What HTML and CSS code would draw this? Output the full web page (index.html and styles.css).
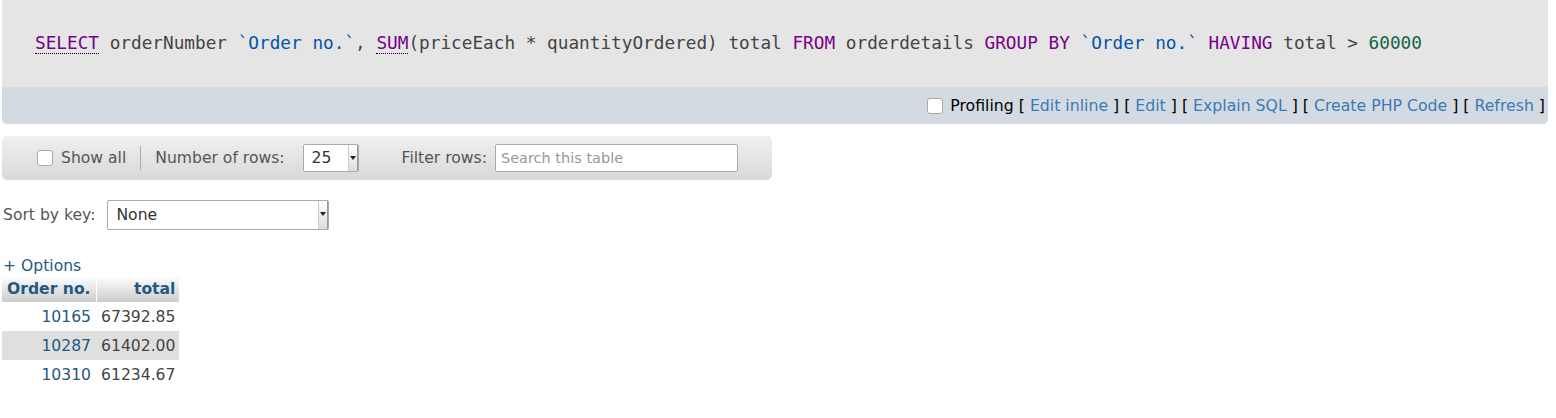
FILE: index.html
```html
<!DOCTYPE html>
<html>
<head>
<meta charset="utf-8">
<link rel="stylesheet" href="styles.css">
</head>
<body>
<div class="page">
  <div class="sqlbox">
    <div class="sql"><span class="kw abbr">SELECT</span> orderNumber <span class="str">`Order no.`</span>, <span class="kw abbr">SUM</span>(priceEach * quantityOrdered) total <span class="kw">FROM</span> orderdetails <span class="kw">GROUP</span> <span class="kw">BY</span> <span class="str">`Order no.`</span> <span class="kw">HAVING</span> total &gt; <span class="num">60000</span></div>
    <div class="tools">
      <span class="cb"></span><span class="line"><span class="prof">Profiling</span> [ <a>Edit inline</a> ] [ <a>Edit</a> ] [ <a>Explain SQL</a> ] [ <a>Create PHP Code</a> ] [ <a>Refresh</a> ]</span>
    </div>
  </div>

  <div class="navbar">
    <span class="cb"></span><span class="lbl showall">Show all</span>
    <span class="sep"></span>
    <span class="lbl">Number of rows:</span>
    <span class="select rows"><span class="val">25</span><span class="arrow"></span></span>
    <span class="lbl filter">Filter rows:</span>
    <span class="search">Search this table</span>
  </div>

  <div class="sortrow">
    <span class="lbl">Sort by key:</span>
    <span class="select sortsel"><span class="val">None</span><span class="arrow"></span></span>
  </div>

  <div class="options"><a>+ Options</a></div>

  <table class="data">
    <thead>
      <tr><th>Order no.</th><th>total</th></tr>
    </thead>
    <tbody>
      <tr><td class="link">10165</td><td>67392.85</td></tr>
      <tr class="even"><td class="link">10287</td><td>61402.00</td></tr>
      <tr><td class="link">10310</td><td>61234.67</td></tr>
    </tbody>
  </table>
</div>
</body>
</html>
```

FILE: styles.css
```css
html, body {
  margin: 0;
  padding: 0;
  background: #fff;
}
body {
  font-family: "DejaVu Sans", sans-serif;
  font-size: 15.6px;
  color: #444;
}
.page {
  padding-left: 2px;
  width: 1546px;
}
.sqlbox {
  background: #e5e5e5;
  border-radius: 0 0 5px 5px;
  overflow: hidden;
}
.sql {
  font-family: "DejaVu Sans Mono", monospace;
  font-size: 17.73px;
  color: #444;
  height: 87px;
  line-height: 87px;
  padding-left: 33px;
  white-space: pre;
}
.kw { color: #770088; }
.abbr { border-bottom: 1px dotted #000; }
.str { color: #0055aa; }
.num { color: #116644; }
.tools {
  background: #d3dae1;
  height: 37px;
  display: flex;
  align-items: center;
  justify-content: flex-end;
  padding-right: 3px;
  font-size: 15.72px;
  color: #000;
}
.tools .line { white-space: pre; }
.tools a { color: #3a7ab7; }
.tools .cb { margin-right: 7px; }
.prof { color: #000; }
.cb {
  display: inline-block;
  width: 14px;
  height: 14px;
  border: 1px solid #aaa;
  border-radius: 3px;
  background: #fff;
  margin-right: 8px;
  box-sizing: content-box;
}
.navbar {
  margin-top: 12px;
  width: 770px;
  height: 44px;
  box-sizing: border-box;
  border-radius: 5px;
  background: linear-gradient(#f0f0f0, #d8d8d8);
  display: flex;
  align-items: center;
  padding-left: 35px;
}
.lbl { color: #555; }
.sep {
  width: 1px;
  height: 24px;
  background: #aaa;
  margin: 0 14px 0 14px;
}
.select {
  display: inline-flex;
  align-items: center;
  justify-content: space-between;
  background: #fff;
  border: 1px solid #aaa;
  border-radius: 2px;
  height: 28px;
  box-sizing: border-box;
  color: #333;
}
.select .val { padding-left: 8px; }
.select .arrow {
  width: 10px;
  height: 26px;
  background: linear-gradient(#fff, #ddd);
  border-left: 1px solid #ccc;
  border-right: 1px solid #999;
  box-sizing: border-box;
  position: relative;
}
.select .arrow::after {
  content: "";
  position: absolute;
  left: 1px;
  top: 11px;
  border-left: 3px solid transparent;
  border-right: 3px solid transparent;
  border-top: 4px solid #222;
}
.rows { width: 56px; margin-left: 18px; }
.filter { margin-left: 43px; }
.search {
  margin-left: 8px;
  width: 243px;
  height: 28px;
  box-sizing: border-box;
  border: 1px solid #aaa;
  border-radius: 2px;
  background: #fff;
  color: #999;
  font-size: 14.5px;
  padding-left: 5px;
  line-height: 26px;
}
.sortrow {
  margin-top: 20px;
  display: flex;
  align-items: center;
  padding-left: 1px;
}
.sortsel { width: 222px; margin-left: 12px; height: 30px; }
.sortsel .arrow { height: 28px; }
.options {
  margin-top: 26px;
  padding-left: 1px;
  line-height: 20px;
}
.options a { color: #235a81; }
.data {
  border-collapse: collapse;
}
.data th {
  font-weight: bold;
  color: #235a81;
  background: linear-gradient(#fff, #ccc);
  height: 26px;
  padding: 0 4px 0 4px;
  text-align: right;
}
.data th:first-child {
  text-align: left;
  border-right: 1px solid #fff;
  padding: 0 5px 0 5px;
}
.data td {
  height: 28px;
  padding: 1px 4px 0 5px;
  text-align: right;
  color: #444;
}
.data td.link { color: #235a81; padding-right: 5px; }
.data tr.even td { background: #dfdfdf; }
```
